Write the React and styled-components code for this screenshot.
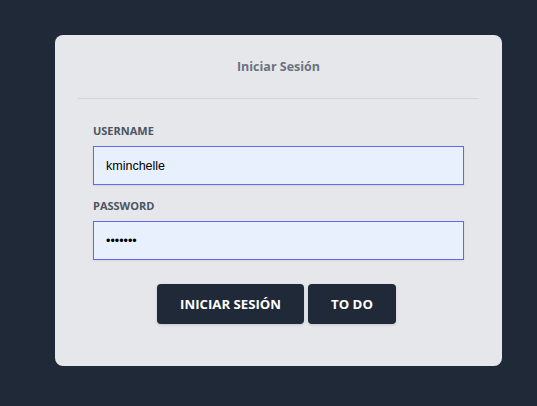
import React from "react";
import styled, { createGlobalStyle } from "styled-components";

const Global = createGlobalStyle`
  html, body { margin: 0; padding: 0; background: #1f2937; }
  body { font-family: "Open Sans", "Noto Sans", sans-serif; }
`;

const Page = styled.div`
  min-height: 406px;
  padding: 35px 0 0 55px;
  box-sizing: border-box;
`;

const Card = styled.div`
  width: 447px;
  height: 331px;
  background: #e5e7eb;
  border-radius: 8px;
  box-sizing: border-box;
  display: flex;
  flex-direction: column;
`;

const Header = styled.div`
  height: 64px;
  display: flex;
  align-items: center;
  justify-content: center;
  margin: 0 23px;
  border-bottom: 1px solid #d1d5db;
  box-sizing: border-box;
  padding-top: 1px;
`;

const Title = styled.h1`
  margin: 0;
  font-size: 12.5px;
  font-weight: 700;
  color: #6b7280;
  line-height: 16px;
`;

const Form = styled.form`
  padding: 24px 38px 0;
  display: flex;
  flex-direction: column;
`;

const Label = styled.label`
  display: block;
  font-size: 11px;
  font-weight: 700;
  color: #4b5563;
  line-height: 16px;
  margin-bottom: 7px;
  text-transform: uppercase;
`;

const Field = styled.div`
  margin-bottom: ${(p) => p.$gap}px;
`;

const Input = styled.input`
  display: block;
  width: 100%;
  height: 39px;
  box-sizing: border-box;
  border: 1px solid #6366f1;
  background: #e8f0fe;
  padding: 0 12px;
  font-family: "Liberation Sans", Arial, sans-serif;
  font-size: 12.5px;
  color: #000;
  outline: none;
  border-radius: 0;
  box-shadow: 0 1px 2px rgba(0, 0, 0, 0.08);
`;

const Actions = styled.div`
  display: flex;
  justify-content: center;
  gap: 4px;
  padding-right: 4px;
`;

const Button = styled.button`
  height: 40px;
  padding: 0 ${(p) => p.$pad}px;
  background: #1f2937;
  color: #fff;
  border: none;
  border-radius: 4px;
  font-family: "Open Sans", "Noto Sans", sans-serif;
  font-size: 13.2px;
  font-weight: 700;
  text-transform: uppercase;
  box-shadow: 0 1px 3px rgba(0, 0, 0, 0.15);
  cursor: pointer;
`;

export default function App() {
  return (
    <>
      <Global />
      <Page>
        <Card>
          <Header>
            <Title>Iniciar Sesión</Title>
          </Header>
          <Form onSubmit={(e) => e.preventDefault()}>
            <Field $gap={13}>
              <Label>Username</Label>
              <Input type="text" defaultValue="kminchelle" readOnly />
            </Field>
            <Field $gap={24}>
              <Label>Password</Label>
              <Input type="password" defaultValue="0lelplR" readOnly />
            </Field>
            <Actions>
              <Button type="button" $pad={23}>Iniciar Sesión</Button>
              <Button type="button" $pad={23}>To Do</Button>
            </Actions>
          </Form>
        </Card>
      </Page>
    </>
  );
}
